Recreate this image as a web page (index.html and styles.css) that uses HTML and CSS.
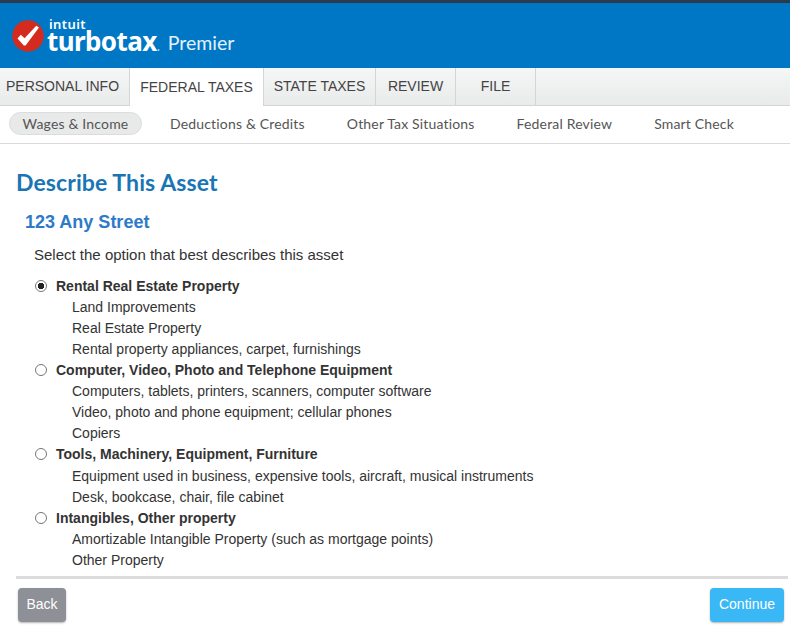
FILE: index.html
```html
<!DOCTYPE html>
<html lang="en">
<head>
  <meta charset="UTF-8" />
  <title>Describe This Asset - TurboTax Premier</title>
  <link rel="stylesheet" href="styles.css">
</head>
<body>

<header class="brand-bar">
  <svg class="logo-mark" width="32" height="32" viewBox="0 0 32 32" aria-hidden="true">
    <circle cx="16" cy="16" r="15.7" fill="#d52b1e"/>
    <path d="M5.5 18.5L8.8 14.8L12.6 18.2L24.2 5.8L27 7.6L13.6 25.6L11.8 25.6Z" fill="#fff"/>
  </svg>
  <div class="logo-text">
    <span class="logo-intuit">intuit</span>
    <span class="logo-name">turbotax<span class="logo-dot">.</span></span>
  </div>
  <span class="logo-edition">Premier</span>
</header>

<nav class="tabs">
  <a class="tab tab-personal" href="#">PERSONAL INFO</a>
  <a class="tab tab-federal active" href="#">FEDERAL TAXES</a>
  <a class="tab tab-state" href="#">STATE TAXES</a>
  <a class="tab tab-review" href="#">REVIEW</a>
  <a class="tab tab-file" href="#">FILE</a>
</nav>

<nav class="subnav">
  <a class="pill" href="#">Wages &amp; Income</a>
  <a href="#">Deductions &amp; Credits</a>
  <a href="#">Other Tax Situations</a>
  <a href="#">Federal Review</a>
  <a href="#">Smart Check</a>
</nav>

<main class="content">
  <h1>Describe This Asset</h1>
  <h2>123 Any Street</h2>
  <p class="prompt">Select the option that best describes this asset</p>

  <form class="options">
    <label class="option"><input type="radio" name="asset" checked> Rental Real Estate Property</label>
    <ul>
      <li>Land Improvements</li>
      <li>Real Estate Property</li>
      <li>Rental property appliances, carpet, furnishings</li>
    </ul>
    <label class="option"><input type="radio" name="asset"> Computer, Video, Photo and Telephone Equipment</label>
    <ul>
      <li>Computers, tablets, printers, scanners, computer software</li>
      <li>Video, photo and phone equipment; cellular phones</li>
      <li>Copiers</li>
    </ul>
    <label class="option"><input type="radio" name="asset"> Tools, Machinery, Equipment, Furniture</label>
    <ul class="list-tools">
      <li>Equipment used in business, expensive tools, aircraft, musical instruments</li>
      <li>Desk, bookcase, chair, file cabinet</li>
    </ul>
    <label class="option"><input type="radio" name="asset"> Intangibles, Other property</label>
    <ul>
      <li>Amortizable Intangible Property (such as mortgage points)</li>
      <li>Other Property</li>
    </ul>
  </form>

  <div class="actions">
    <button class="btn-back">Back</button>
    <button class="btn-continue">Continue</button>
  </div>
</main>

</body>
</html>
```

FILE: styles.css
```css
html, body {
  margin: 0;
  height: 632px;
  overflow: hidden;
}

body {
  background-color: white;
  font-family: 'Liberation Sans', Arial, sans-serif;
  font-size: 14px;
  color: #333;
}

a {
  color: inherit;
  text-decoration: none;
}

.brand-bar {
  box-sizing: border-box;
  height: 68px;
  background-color: #0077c5;
  border-top: 3px solid #2c3a4b;
  display: flex;
  align-items: center;
  padding-left: 12px;
  color: white;
}

.logo-text {
  display: flex;
  flex-direction: column;
  margin-left: 3px;
  margin-top: 5px;
  font-family: 'Noto Sans', sans-serif;
}

.logo-intuit {
  font-size: 13px;
  font-weight: 600;
  line-height: 10px;
  letter-spacing: 0.4px;
  margin-left: 2px;
}

.logo-name {
  font-size: 26px;
  font-weight: 700;
  line-height: 24px;
  letter-spacing: -0.6px;
}

.logo-dot {
  font-size: 14px;
  font-weight: 400;
  color: #a9d3ee;
}

.logo-edition {
  font-family: Lato, sans-serif;
  font-size: 19.5px;
  margin-left: 8px;
  margin-top: 14px;
  color: #e4f1fa;
}

.tabs {
  box-sizing: border-box;
  height: 38px;
  display: flex;
  background: linear-gradient(#f5f6f6, #e9eaea);
  border-bottom: 1px solid #d4d5d5;
}

.tab {
  box-sizing: border-box;
  height: 37px;
  line-height: 37px;
  text-align: center;
  border-right: 1px solid #d4d5d5;
  color: #444;
}

.tab-personal { width: 130px; padding-right: 4px; }
.tab-federal { width: 134px; }
.tab-state { width: 112px; }
.tab-review { width: 80px; }
.tab-file { width: 80px; }

.tab.active {
  height: 38px;
  line-height: 39px;
  background-color: white;
}

.subnav {
  box-sizing: border-box;
  height: 38px;
  display: flex;
  align-items: center;
  padding: 0 0 3px 9px;
  border-bottom: 1px solid #d9d9d9;
  font-family: Lato, sans-serif;
  font-size: 14px;
  color: #555;
  gap: 42px;
}

.subnav a {
  letter-spacing: 0.17px;
}

.subnav .pill {
  box-sizing: border-box;
  width: 133px;
  height: 23px;
  line-height: 21px;
  margin-right: -14px;
  text-align: center;
  background-color: #e8e9e9;
  border: 1px solid #dcdcdc;
  border-radius: 12px;
}

.content {
  padding: 0 2px 0 16px;
}

h1 {
  margin: 24px 0 0;
  font-family: Lato, sans-serif;
  font-size: 23px;
  font-weight: 700;
  line-height: 28px;
  letter-spacing: 0.1px;
  color: #1a75b5;
}

h2 {
  margin: 14px 0 0 9px;
  font-size: 18px;
  font-weight: 700;
  line-height: 24px;
  color: #2d7ac9;
}

.prompt {
  margin: 10px 0 0 18px;
  font-size: 15px;
  line-height: 22px;
}

.options {
  margin: 10px 0 0;
}

.option {
  box-sizing: border-box;
  display: flex;
  align-items: center;
  height: 21px;
  padding-bottom: 2px;
  margin-left: 19px;
  font-weight: 700;
  gap: 9px;
}

.option input {
  appearance: none;
  box-sizing: border-box;
  width: 12px;
  height: 12px;
  margin: 0;
  flex: none;
  border: 1px solid #777;
  border-radius: 50%;
  background-color: white;
}

.option input:checked {
  background: radial-gradient(circle, #222 3px, white 3.5px);
}

.options ul {
  list-style: none;
  margin: 0;
  padding: 0 0 0 56px;
  line-height: 21px;
}

.options .list-tools {
  margin-top: 1px;
}

.actions {
  display: flex;
  justify-content: space-between;
  align-items: flex-start;
  margin-top: 5px;
  padding: 9px 4px 0 2px;
  border-top: 3px solid #dcdcdc;
}

.actions button {
  height: 34px;
  padding: 0 0 2px;
  border: none;
  border-radius: 4px;
  font-family: 'Liberation Sans', Arial, sans-serif;
  font-size: 14px;
  color: white;
  box-shadow: 0 1px 2px rgba(0, 0, 0, 0.3);
}

.btn-back {
  width: 48px;
  background-color: #8d9096;
}

.btn-continue {
  width: 74px;
  background-color: #39b8f5;
}
```
